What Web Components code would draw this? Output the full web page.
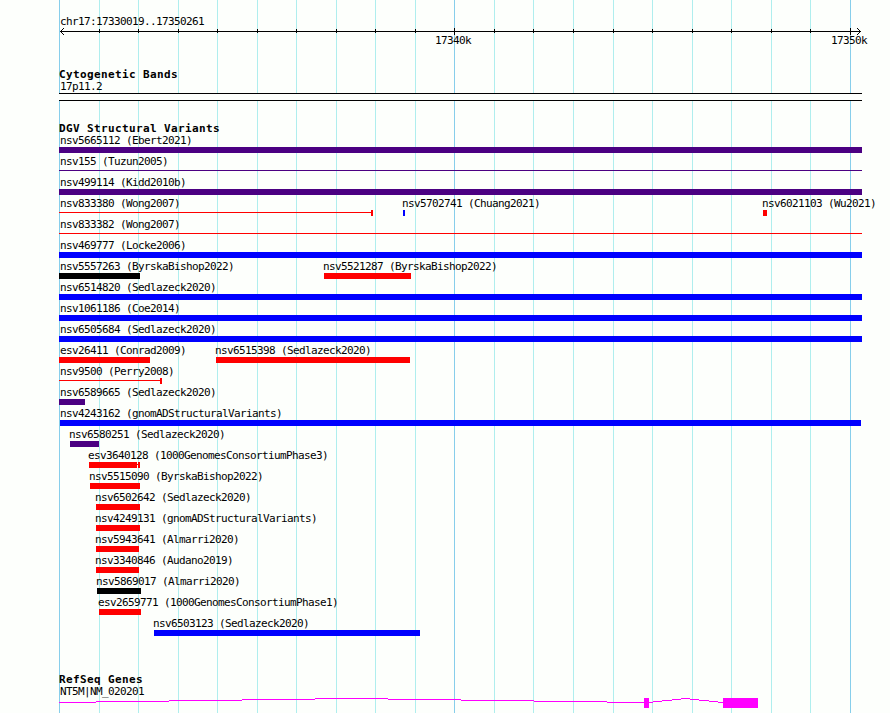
<!DOCTYPE html>
<html lang="en">
<head>
<meta charset="utf-8">
<title>chr17:17330019..17350261</title>
<style>
  html, body {
    margin: 0;
    background: #fdfffc;
    overflow: hidden;
  }
</style>
</head>
<body>
<genome-browser>
  <genome-ruler location="chr17:17330019..17350261"></genome-ruler>

  <genome-track label="Cytogenetic Bands" style="margin-bottom: 22px">
    <cyto-band name="17p11.2"></cyto-band>
  </genome-track>

  <genome-track label="DGV Structural Variants" id="variants" style="margin-bottom: 35px"></genome-track>

  <genome-track label="RefSeq Genes">
    <gene-model name="NT5M|NM_020201"></gene-model>
  </genome-track>
</genome-browser>

<script>
const LEFT = 59;
const RIGHT = 862;
const GRID = [59, 99, 138, 178, 217, 257, 296, 336, 375, 415, 454, 494, 533, 573, 613, 652, 692, 731, 771, 810, 850];
const MAJOR = [59, 454, 850];

const textStyle = `
  .text {
    font: 11px/12px "DejaVu Sans Mono", monospace;
    letter-spacing: -0.622px;
    height: 12px;
    white-space: pre;
    color: #000;
  }
`;

function rect(x, y, width, height, fill) {
  return `<rect x="${x}" y="${y}" width="${width}" height="${height}" fill="${fill}"/>`;
}

class GenomeBrowser extends HTMLElement {
  constructor() {
    super();
    this.attachShadow({ mode: 'open' });
    const lines = GRID.map(x => rect(x, 0, 1, 713, MAJOR.includes(x) ? '#87ceeb' : '#afeeee')).join('');
    this.shadowRoot.innerHTML = `
      <style>
        :host {
          display: grid;
          width: 890px;
          height: 713px;
          overflow: hidden;
        }
        svg, .tracks {
          grid-area: 1 / 1;
        }
        .tracks {
          display: flex;
          flex-direction: column;
          z-index: 1;
        }
      </style>
      <svg width="890" height="713" shape-rendering="crispEdges">${lines}</svg>
      <div class="tracks"><slot></slot></div>
    `;
  }
}

class GenomeRuler extends HTMLElement {
  constructor() {
    super();
    this.attachShadow({ mode: 'open' });
  }

  connectedCallback() {
    const ticks = GRID.slice(1).map(x => MAJOR.includes(x) ? rect(x, 1, 1, 7, '#000') : rect(x, 2, 1, 4, '#000')).join('');
    this.shadowRoot.innerHTML = `
      <style>
        ${textStyle}
        :host {
          display: block;
          height: 53px;
          padding-top: 16px;
        }
        .location {
          margin-left: 60px;
          height: 11px;
        }
        svg {
          display: block;
        }
        .scale {
          display: grid;
        }
        .scale .text {
          grid-area: 1 / 1;
        }
      </style>
      <div class="text location">${this.getAttribute('location')}</div>
      <svg width="890" height="8" shape-rendering="crispEdges">
        ${rect(60, 4, 801, 1, '#000')}
        ${ticks}
        ${[1, 2, 3].map(i => rect(60 + i, 4 - i, 1, 1, '#000') + rect(60 + i, 4 + i, 1, 1, '#000')
          + rect(860 - i, 4 - i, 1, 1, '#000') + rect(860 - i, 4 + i, 1, 1, '#000')).join('')}
      </svg>
      <div class="scale">
        <div class="text" style="margin-left: 435px">17340k</div>
        <div class="text" style="margin-left: 831px">17350k</div>
      </div>
    `;
  }
}

class GenomeTrack extends HTMLElement {
  constructor() {
    super();
    this.attachShadow({ mode: 'open' });
  }

  connectedCallback() {
    this.shadowRoot.innerHTML = `
      <style>
        :host {
          display: block;
        }
        .title {
          margin-left: 59px;
          height: 12px;
          font: bold 11px/12px "DejaVu Sans Mono", monospace;
          letter-spacing: 0.38px;
          white-space: pre;
          color: #000;
        }
      </style>
      <div class="title">${this.getAttribute('label')}</div>
      <slot></slot>
    `;
  }
}

class CytoBand extends HTMLElement {
  constructor() {
    super();
    this.attachShadow({ mode: 'open' });
  }

  connectedCallback() {
    this.shadowRoot.innerHTML = `
      <style>
        ${textStyle}
        :host {
          display: block;
        }
        .text {
          margin-left: 60px;
        }
        .band {
          box-sizing: border-box;
          margin-left: ${LEFT}px;
          width: ${RIGHT - LEFT}px;
          height: 8px;
          border: solid #000;
          border-width: 1px 0;
          background: #fdfffc;
        }
      </style>
      <div class="text">${this.getAttribute('name')}</div>
      <div class="band"></div>
    `;
  }
}

// One line of the track; its features share a single grid cell
class FeatureRow extends HTMLElement {
  constructor() {
    super();
    this.attachShadow({ mode: 'open' });
    this.shadowRoot.innerHTML = `
      <style>
        :host {
          display: grid;
          height: 21px;
        }
        ::slotted(*) {
          grid-area: 1 / 1;
        }
      </style>
      <slot></slot>
    `;
  }
}

class VariantFeature extends HTMLElement {
  constructor() {
    super();
    this.attachShadow({ mode: 'open' });
  }

  connectedCallback() {
    const start = Number(this.getAttribute('start'));
    const width = Number(this.getAttribute('end')) - start;
    const color = this.getAttribute('color');
    const shapes = {
      bar: rect(0, 0, width, 6, color),
      line: rect(0, 2, width, 1, color),
      capped: rect(0, 2, width, 1, color) + rect(width - 2, 0, 2, 6, color),
      split: rect(0, 0, width - 3, 6, color) + rect(width - 3, 2, 1, 1, color) + rect(width - 2, 0, 2, 6, color)
    };
    this.shadowRoot.innerHTML = `
      <style>
        ${textStyle}
        :host {
          display: block;
          width: max-content;
          margin-left: ${start}px;
        }
        .text {
          margin-left: ${Math.max(start - 1, 60) - start}px;
        }
        svg {
          display: block;
        }
      </style>
      <div class="text">${this.getAttribute('name')}</div>
      <svg width="${width}" height="6" shape-rendering="crispEdges">${shapes[this.getAttribute('shape')]}</svg>
    `;
  }
}

class GeneModel extends HTMLElement {
  constructor() {
    super();
    this.attachShadow({ mode: 'open' });
  }

  connectedCallback() {
    const steps = [4, 3, 2, 1, 0, 1, 2, 3, 4];
    const intron = edges => steps.map((y, i) => rect(edges[i], y, edges[i + 1] - edges[i], 1, '#f0f')).join('');
    this.shadowRoot.innerHTML = `
      <style>
        ${textStyle}
        :host {
          display: block;
        }
        .text {
          margin-left: 60px;
        }
        svg {
          display: block;
        }
      </style>
      <div class="text">${this.getAttribute('name')}</div>
      <svg width="890" height="10" shape-rendering="crispEdges">
        ${intron([59, 96, 169, 242, 315, 388, 461, 534, 607, 644])}
        ${rect(644, 0, 5, 10, '#f0f')}
        ${intron([649, 653, 662, 672, 681, 690, 699, 709, 718, 723])}
        ${rect(723, 0, 35, 10, '#f0f')}
      </svg>
    `;
  }
}

const red = '#ff0000';
const blue = '#0000ff';
const indigo = '#4b0082';
const black = '#000000';

const rows = [
  [['nsv5665112 (Ebert2021)', 59, 862, indigo]],
  [['nsv155 (Tuzun2005)', 59, 862, indigo, 'line']],
  [['nsv499114 (Kidd2010b)', 59, 862, indigo]],
  [
    ['nsv833380 (Wong2007)', 59, 373, red, 'capped'],
    ['nsv5702741 (Chuang2021)', 403, 405, blue],
    ['nsv6021103 (Wu2021)', 763, 767, red]
  ],
  [['nsv833382 (Wong2007)', 59, 862, red, 'line']],
  [['nsv469777 (Locke2006)', 59, 862, blue]],
  [
    ['nsv5557263 (ByrskaBishop2022)', 59, 140, black],
    ['nsv5521287 (ByrskaBishop2022)', 324, 411, red]
  ],
  [['nsv6514820 (Sedlazeck2020)', 59, 862, blue]],
  [['nsv1061186 (Coe2014)', 59, 862, blue]],
  [['nsv6505684 (Sedlazeck2020)', 59, 862, blue]],
  [
    ['esv26411 (Conrad2009)', 59, 150, red],
    ['nsv6515398 (Sedlazeck2020)', 216, 410, red]
  ],
  [['nsv9500 (Perry2008)', 59, 162, red, 'capped']],
  [['nsv6589665 (Sedlazeck2020)', 59, 85, indigo]],
  [['nsv4243162 (gnomADStructuralVariants)', 60, 861, blue]],
  [['nsv6580251 (Sedlazeck2020)', 70, 99, indigo]],
  [['esv3640128 (1000GenomesConsortiumPhase3)', 89, 140, red, 'split']],
  [['nsv5515090 (ByrskaBishop2022)', 90, 140, red]],
  [['nsv6502642 (Sedlazeck2020)', 96, 140, red]],
  [['nsv4249131 (gnomADStructuralVariants)', 96, 140, red]],
  [['nsv5943641 (Almarri2020)', 96, 139, red]],
  [['nsv3340846 (Audano2019)', 96, 139, red]],
  [['nsv5869017 (Almarri2020)', 97, 141, black]],
  [['esv2659771 (1000GenomesConsortiumPhase1)', 99, 141, red]],
  [['nsv6503123 (Sedlazeck2020)', 154, 420, blue]]
];

document.getElementById('variants').innerHTML = rows.map(row => `
  <feature-row>
    ${row.map(([name, start, end, color, shape = 'bar']) =>
      `<variant-feature name="${name}" start="${start}" end="${end}" color="${color}" shape="${shape}"></variant-feature>`
    ).join('')}
  </feature-row>
`).join('');

customElements.define('genome-browser', GenomeBrowser);
customElements.define('genome-ruler', GenomeRuler);
customElements.define('genome-track', GenomeTrack);
customElements.define('cyto-band', CytoBand);
customElements.define('feature-row', FeatureRow);
customElements.define('variant-feature', VariantFeature);
customElements.define('gene-model', GeneModel);
</script>
</body>
</html>
